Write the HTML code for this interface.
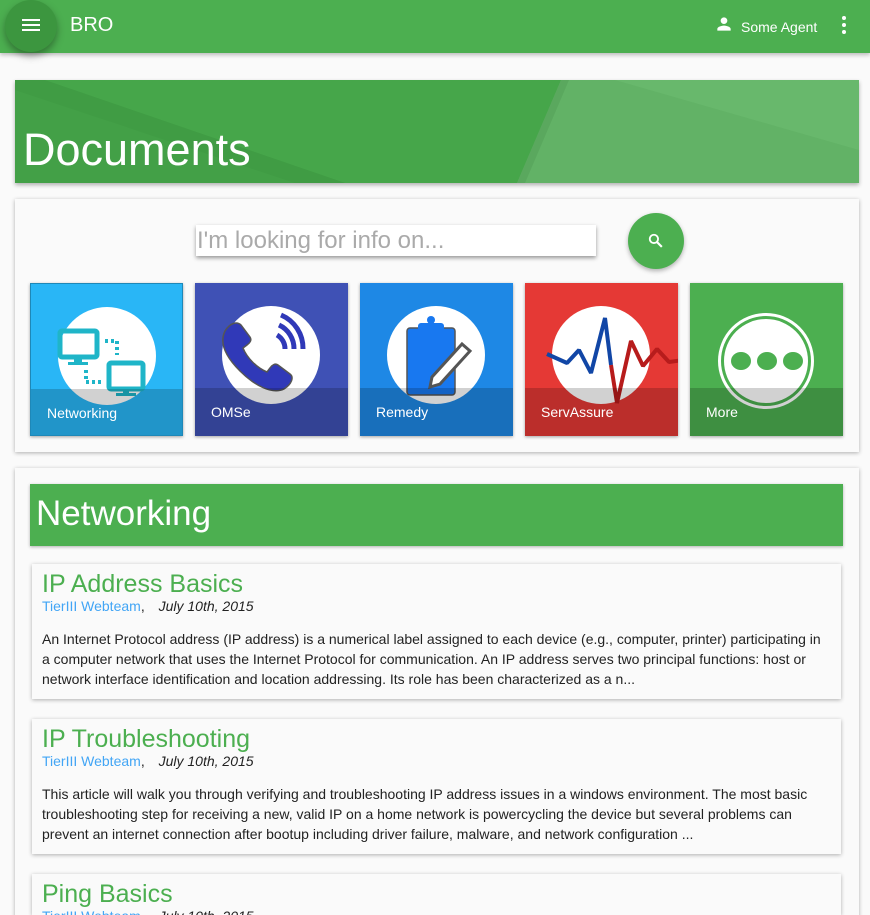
<!DOCTYPE html>
<html style="width:870px;height:915px;overflow:hidden"><head><meta charset="utf-8"><style>
*{box-sizing:border-box;margin:0;padding:0}
body{width:870px;height:915px;overflow:hidden;background:#fafafa;font-family:"Liberation Sans",sans-serif;position:relative}
.hdr{position:absolute;left:0;top:0;width:870px;height:53px;background:#4caf50;box-shadow:0 2px 4px rgba(0,0,0,.25);z-index:2}
.menu{position:absolute;left:5px;top:0;width:52px;height:52px;border-radius:50%;background:#3c963f;box-shadow:0 4px 8px rgba(0,0,0,.35)}
.menu i{position:absolute;left:17px;width:18px;height:2px;background:#fff}
.bro{position:absolute;left:70px;top:14px;color:#fff;font-size:20px}
.agent{position:absolute;left:741px;top:19px;color:#fff;font-size:14px}
.card{position:absolute;background:#fafafa;box-shadow:0 1px 4px rgba(0,0,0,.3)}
.banner{position:absolute;left:15px;top:80px;width:844px;height:103px;overflow:hidden;background:#43a047;box-shadow:0 2px 4px rgba(0,0,0,.3)}
.banner h1{position:absolute;left:8px;top:44px;color:#fff;font-weight:normal;font-size:45px}
.tile{position:absolute;top:283px;width:153px;height:153px;overflow:hidden;box-shadow:0 1px 3px rgba(0,0,0,.35)}
.tile .c{position:absolute;left:27px;top:23px;width:98px;height:98px;border-radius:50%;background:#fff}
.tile .ov{position:absolute;left:0;top:105px;width:153px;height:48px;background:rgba(0,0,0,.18)}
.tile span{position:absolute;left:16px;top:121px;color:#fff;font-size:14px}
.tile svg{position:absolute;left:0;top:0}
.art{position:absolute;left:32px;width:809px;height:135px;background:#fafafa;box-shadow:0 1px 4px rgba(0,0,0,.3);padding:6px 10px}
.art h2{color:#4caf50;font-weight:normal;font-size:25px;line-height:28px}
.meta{font-size:14px;line-height:16px;color:#222}
.meta a{color:#42a5f5}
.meta em{margin-left:10px}
.art p{margin-top:15px;font-size:14px;line-height:20px;color:#222}
</style></head><body>
<div class="hdr">
 <div class="menu"><i style="top:19px"></i><i style="top:24px"></i><i style="top:29px"></i></div>
 <div class="bro">BRO</div>
 <svg style="position:absolute;left:714px;top:14px" width="20" height="20" viewBox="0 0 24 24"><path fill="#fff" d="M12 12c2.2 0 4-1.8 4-4s-1.8-4-4-4-4 1.8-4 4 1.8 4 4 4zm0 2c-2.7 0-8 1.3-8 4v2h16v-2c0-2.7-5.3-4-8-4z"/></svg>
 <div class="agent">Some Agent</div>
 <svg style="position:absolute;left:840px;top:15px" width="8" height="20"><circle cx="4" cy="3" r="2" fill="#fff"/><circle cx="4" cy="10" r="2" fill="#fff"/><circle cx="4" cy="17" r="2" fill="#fff"/></svg>
</div>
<div class="banner">
 <svg width="844" height="103" style="position:absolute;left:0;top:0"><polygon points="0,0 546,0 502,103 330,103 0,-10" fill="#46a64a"/><polygon points="0,0 30,0 330,103 280,103 0,10" fill="#3f9a43" opacity=".7"/><polygon points="546,0 844,0 844,103 502,103" fill="#62b266"/><polygon points="600,0 844,0 844,70" fill="#68b86c"/><polygon points="546,0 554,0 510,103 502,103" fill="#5aa85e"/></svg>
 <h1>Documents</h1>
</div>
<div class="card" style="left:15px;top:199px;width:844px;height:253px"></div>
<div style="position:absolute;left:196px;top:225px;width:400px;height:31px;background:#fff;box-shadow:0 2px 4px rgba(0,0,0,.4);font-size:24px;color:#aaa;padding:1px 0 0 1px;line-height:29px">I'm looking for info on...</div>
<div style="position:absolute;left:628px;top:213px;width:56px;height:56px;border-radius:50%;background:#4caf50;box-shadow:0 2px 5px rgba(0,0,0,.3)">
 <svg style="position:absolute;left:18px;top:18px" width="20" height="20" viewBox="0 0 24 24"><circle cx="9.5" cy="9.5" r="5" stroke="#fff" stroke-width="2.2" fill="none"/><path d="M13 13l6 6" stroke="#fff" stroke-width="2.6"/></svg>
</div>

<div class="tile" style="left:30px;background:#29b6f6;border:1px solid #1e88b8"><div class="c"></div>
 <svg width="153" height="153" style="left:-1px;top:-1px"><rect x="30" y="48" width="37" height="26" rx="2" fill="none" stroke="#1fb5c8" stroke-width="5"/><rect x="44" y="74" width="8" height="5" fill="#1fb5c8"/><rect x="38" y="79" width="20" height="3" fill="#1fb5c8"/><rect x="79" y="80" width="34" height="26" rx="2" fill="none" stroke="#1fb5c8" stroke-width="5"/><rect x="93" y="106" width="6" height="4" fill="#1fb5c8"/><rect x="86" y="110" width="20" height="3" fill="#1fb5c8"/><path d="M75 58h12v14M56 87v12h16" stroke="#1fb5c8" stroke-width="4" stroke-dasharray="3 3" fill="none"/></svg>
 <div class="ov"></div><span>Networking</span></div>
<div class="tile" style="left:195px;background:#3f51b5"><div class="c"></div>
 <svg width="153" height="153"><path d="M30 48c5-8 12-10 16-6l9 12c2 3 0 6-3 8l-4 3c4 10 14 20 24 24l3-4c2-3 5-5 8-3l12 9c4 3 2 10-6 15-12 6-30-4-44-18S24 60 30 48z" fill="#3039b8" stroke="#555" stroke-width="1.5"/><path d="M82 52a16 16 0 0 1 8 14M84 42a26 26 0 0 1 15 24M86 32a36 36 0 0 1 22 34" stroke="#3039b8" stroke-width="5" fill="none"/></svg>
 <div class="ov"></div><span>OMSe</span></div>
<div class="tile" style="left:360px;background:#1e88e5"><div class="c"></div>
 <svg width="153" height="153"><rect x="47" y="45" width="48" height="67" rx="3" fill="#1878f0" stroke="#555" stroke-width="1.5"/><rect x="58" y="40" width="26" height="10" rx="3" fill="#1878f0"/><circle cx="71" cy="37" r="4" fill="#1878f0"/><path d="M72 94l30-33 8 7-30 33-10 3z" fill="#fff" stroke="#555" stroke-width="3"/></svg>
 <div class="ov"></div><span>Remedy</span></div>
<div class="tile" style="left:525px;background:#e53935"><div class="c"></div>
 <svg width="153" height="153"><path d="M22 71l20 9 12-13 12 23 14-55 6 47" stroke="#1146a6" stroke-width="4" fill="none" stroke-linejoin="bevel"/><path d="M86 82l6 38 14-62 12 25 14-17 12 13 14-2" stroke="#b71c1c" stroke-width="4" fill="none" stroke-linejoin="bevel"/></svg>
 <div class="ov"></div><span>ServAssure</span></div>
<div class="tile" style="left:690px;background:#4caf50"><div class="c" style="left:28px;top:30px;width:96px;height:96px;border:3px solid #fff;background:none"></div><div class="c" style="left:34px;top:36px;width:84px;height:84px"></div>
 <svg width="153" height="153"><ellipse cx="51" cy="78" rx="10" ry="9" fill="#4caf50"/><ellipse cx="77" cy="78" rx="10" ry="9" fill="#4caf50"/><ellipse cx="103" cy="78" rx="10" ry="9" fill="#4caf50"/></svg>
 <div class="ov"></div><span>More</span></div>

<div class="card" style="left:15px;top:468px;width:844px;height:460px"></div>
<div style="position:absolute;left:30px;top:484px;width:813px;height:62px;background:#4caf50;box-shadow:0 1px 3px rgba(0,0,0,.3);color:#fff;font-size:35px;padding:10px 6px">Networking</div>
<div class="art" style="top:564px"><h2>IP Address Basics</h2><div class="meta"><a>TierIII Webteam</a>, <em>July 10th, 2015</em></div><p>An Internet Protocol address (IP address) is a numerical label assigned to each device (e.g., computer, printer) participating in a computer network that uses the Internet Protocol for communication. An IP address serves two principal functions: host or network interface identification and location addressing. Its role has been characterized as a n...</p></div>
<div class="art" style="top:719px"><h2>IP Troubleshooting</h2><div class="meta"><a>TierIII Webteam</a>, <em>July 10th, 2015</em></div><p>This article will walk you through verifying and troubleshooting IP address issues in a windows environment. The most basic troubleshooting step for receiving a new, valid IP on a home network is powercycling the device but several problems can prevent an internet connection after bootup including driver failure, malware, and network configuration ...</p></div>
<div class="art" style="top:874px;height:41px"><h2>Ping Basics</h2><div class="meta"><a>TierIII Webteam</a>, <em>July 10th, 2015</em></div></div>
</body></html>
